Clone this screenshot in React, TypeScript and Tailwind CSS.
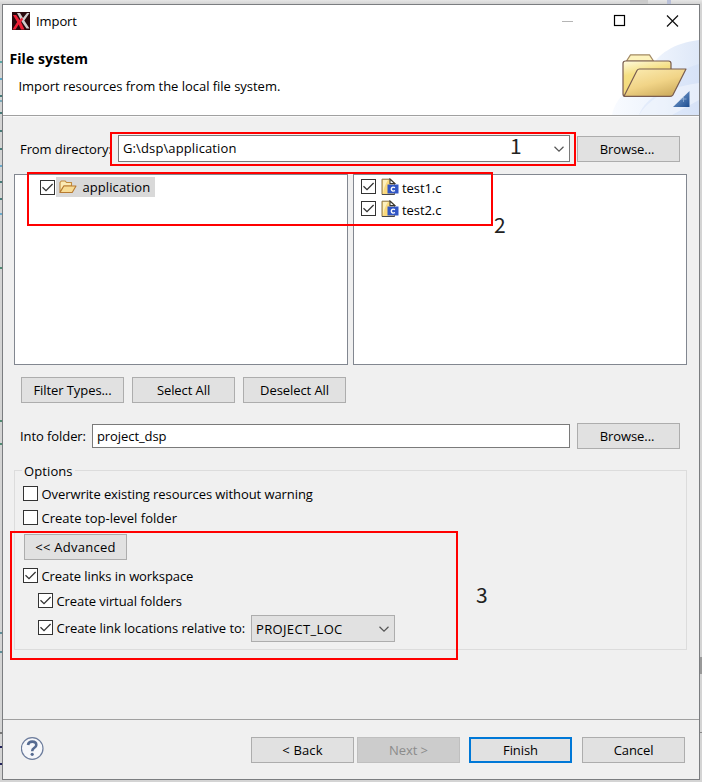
import type { ReactNode } from 'react'
import clsx from 'clsx'

interface ButtonProps {
  children: ReactNode
  className?: string
  disabled?: boolean
  primary?: boolean
}

function Button({ children, className, disabled, primary }: ButtonProps) {
  return (
    <button
      className={clsx(
        'flex h-[26px] w-[103px] shrink-0 items-center justify-center whitespace-nowrap',
        disabled && 'border border-[#bfbfbf] bg-[#cccccc] text-[#8b8b8b]',
        primary && 'border-2 border-[#0078d7] bg-[#e1e1e1]',
        !disabled && !primary && 'border border-[#adadad] bg-[#e1e1e1]',
        className
      )}
    >
      {children}
    </button>
  )
}

function Checkbox({ checked }: { checked?: boolean }) {
  return (
    <span className="block h-[15px] w-[15px] shrink-0 border border-[#333] bg-white">
      {checked && (
        <svg width="13" height="13" viewBox="0 0 13 13" fill="none" stroke="#333" strokeWidth="1.3">
          <path d="M1.5 6.3 L5 9.6 L11.6 3" />
        </svg>
      )}
    </span>
  )
}

function Option({ label, checked, className }: { label: string; checked?: boolean; className?: string }) {
  return (
    <label className={clsx('flex h-[15px] items-center gap-[3.5px] whitespace-nowrap', className)}>
      <Checkbox checked={checked} />
      <span>{label}</span>
    </label>
  )
}

function Chevron() {
  return (
    <svg width="12" height="8" viewBox="0 0 12 8" fill="none" stroke="#555" strokeWidth="1.2">
      <path d="M1.5 1.8 L6 6.2 L10.5 1.8" />
    </svg>
  )
}

function AppIcon() {
  return (
    <svg width="18" height="18" viewBox="0 0 18 18">
      <rect width="18" height="18" fill="#2a080c" />
      <path d="M5 1 H8 L11 6 L15 1 H17.5 L12.3 8.5 L17.5 16.5 H14.5 L10 10 Z" fill="#d2cccc" />
      <path d="M1 3 H4.2 L7.5 8 L10 5.5 L11 7.5 L9 10 L12.5 17.5 H9 L6.7 12.5 L3.5 17.5 H0.5 L5.2 10 Z" fill="#ef2036" />
    </svg>
  )
}

function Banner() {
  return (
    <svg width="87" height="75" viewBox="0 0 87 75" className="absolute right-0 bottom-0">
      <defs>
        <linearGradient id="sky" x1="0" y1="0" x2="1" y2="0">
          <stop offset="0" stopColor="#f7faff" />
          <stop offset="0.5" stopColor="#eaf1fc" />
          <stop offset="1" stopColor="#d6e2f6" />
        </linearGradient>
        <linearGradient id="back" x1="0" y1="0" x2="0.3" y2="1">
          <stop offset="0" stopColor="#fffbe0" />
          <stop offset="0.4" stopColor="#f5df83" />
          <stop offset="1" stopColor="#f3d778" />
        </linearGradient>
        <linearGradient id="front" x1="0.2" y1="0" x2="0.8" y2="1">
          <stop offset="0" stopColor="#fae9ad" />
          <stop offset="0.5" stopColor="#f1d487" />
          <stop offset="1" stopColor="#cba95b" />
        </linearGradient>
        <linearGradient id="corner" x1="0" y1="0" x2="1" y2="1">
          <stop offset="0" stopColor="#86abd7" />
          <stop offset="1" stopColor="#1d4d91" />
        </linearGradient>
      </defs>
      <path d="M87 0 C62 3 45 14 38 30 C22 45 4 55 0 75 H87 Z" fill="url(#sky)" opacity="0.8" />
      <path d="M87 24 C72 28 60 36 52 50 C38 58 30 66 27 75 H87 Z" fill="#c9dbf5" opacity="0.35" />
      <path d="M87 43 C62 46 39 56 27 75 H60 L87 60 Z" fill="#fff" opacity="0.4" />
      <g stroke="#795d50" strokeWidth="1.2" strokeLinejoin="round">
        <path d="M14.5 21 L18.5 14.8 H37.5 L41.5 21 Z" fill="#fdf3bd" stroke="#a38a65" />
        <path d="M11 23.5 Q11 21 13.5 21 H56.5 Q59 21 59 23.5 V56 H13 Q11 56 11 54 Z" fill="url(#back)" />
        <path d="M12 56.3 L25 30.5 Q25.8 29 27.5 29 H74 L61 54.8 Q60 56.3 58 56.3 Z" fill="url(#front)" />
      </g>
      <path d="M77.5 51 V67 H61 Z" fill="url(#corner)" />
      <path d="M71.5 56 V62 M68.5 59 H74.5" stroke="#adc6e4" strokeWidth="1" opacity="0.6" />
    </svg>
  )
}

function FolderIcon() {
  return (
    <svg width="18" height="14" viewBox="0 0 18 14" strokeLinejoin="round">
      <path d="M1 12 V2.5 L2.3 1 H6.2 L7.5 2.5 H12.5 V6 H5 Z" fill="#fbeab5" stroke="#c18a3c" strokeWidth="1.1" />
      <path d="M1 12.5 L4.8 6 H17 L13.2 12.5 Z" fill="#f8dc94" stroke="#b77b32" strokeWidth="1.1" />
    </svg>
  )
}

function SourceIcon() {
  return (
    <svg width="18" height="18" viewBox="0 0 18 18" className="ml-[5px]">
      <path d="M1 1.2 H9.5 L13.5 5.2 V16.5 H1 Z" fill="#fad97c" stroke="#8a7448" strokeWidth="1" />
      <path d="M2 16 V2 H7 Q3 8 2 16 Z" fill="#fdf0bd" />
      <path d="M9 1 V5.5 H13.8 Z" fill="#fff" stroke="#39372f" strokeWidth="1.1" />
      <path d="M1 16.5 H13.5" stroke="#45464c" />
      <rect x="6.5" y="6.5" width="11" height="9" fill="#3156c5" />
      <path d="M14 9.6 Q10.6 8.2 10.3 11.1 Q10.6 14 14 12.7" fill="none" stroke="#fff" strokeWidth="1.4" />
    </svg>
  )
}

function HelpIcon() {
  return (
    <svg width="24" height="24" viewBox="0 0 24 24" fill="none">
      <circle cx="11.2" cy="11.5" r="10.8" fill="#f6f7fa" stroke="#6c7c9c" strokeWidth="1.2" />
      <path d="M7 8 Q7.5 4.6 11.2 4.6 Q15.3 4.6 15.3 7.9 Q15.3 9.6 13.1 11 Q11.2 12.2 11.2 14.2" stroke="#566b91" strokeWidth="2.6" />
      <circle cx="11.2" cy="17.3" r="1.6" fill="#566b91" />
    </svg>
  )
}

// Slivers of the editor window that stay visible left of the dialog
const slivers = [
  { top: 61, color: 'bg-[#5aa7a5]' },
  { top: 78, color: 'bg-[#5ba3c4]' },
  { top: 95, color: 'bg-[#477b78]' },
  { top: 100, color: 'bg-[#79a9b9]' },
  { top: 112, color: 'bg-[#477b78]' },
  { top: 130, color: 'bg-[#477b78]' },
  { top: 148, color: 'bg-[#477b78]' },
  { top: 165, color: 'bg-[#6aaacb]' },
  { top: 181, color: 'bg-[#477b78]' },
  { top: 198, color: 'bg-[#477b78]' },
  { top: 213, color: 'bg-[#6aaacb]' },
  { top: 267, color: 'bg-[#4f8a72]' },
  { top: 420, color: 'bg-[#4f8a72]' },
  { top: 443, color: 'bg-[#4f8a72]' },
  { top: 632, color: 'bg-[#5f8f98]' },
  { top: 651, color: 'bg-[#5f8f98]' },
  { top: 732, color: 'bg-[#777777]' },
  { top: 746, color: 'bg-[#22225b]' },
  { top: 763, color: 'bg-[#22225b]' },
]

function Mark({ className }: { className: string }) {
  return <div className={clsx('pointer-events-none absolute border-2 border-[#ff0000]', className)} />
}

function MarkNumber({ n, className }: { n: number; className: string }) {
  return (
    <span className={clsx("absolute font-['Noto_Sans_CJK_JP',sans-serif] text-[21px] leading-[24px] font-normal tracking-normal text-[#222]", className)}>
      {n}
    </span>
  )
}

export default function App() {
  return (
    <div className="relative h-[782px] w-[702px] overflow-hidden bg-[#c9c9cb] bg-linear-to-b from-[#e6e6e6] to-[#d4d4d4] to-[4px] pt-1 pl-0.5 font-['Open_Sans',sans-serif] text-[13px] leading-[18px] tracking-[-0.08px] text-black">
      {slivers.map((s) => (
        <div key={s.top} className={clsx('absolute left-0 h-[2px] w-[2px]', s.color)} style={{ top: s.top }} />
      ))}
      <div className="absolute top-0 left-[630px] h-1 w-[18px] bg-[#cbcbcb]" />
      <div className="absolute top-0 left-[667px] h-1 w-1 bg-[#b9c0d8]" />
      <div className="absolute top-[657px] left-[700px] h-[17px] w-0.5 bg-[#999]" />
      <div className="absolute top-[732px] left-[700px] h-px w-0.5 bg-[#888]" />

      <div className="flex h-[776px] w-[698px] flex-col border border-[#7b7d80] bg-[#f0f0f0]">
        {/* Title bar and wizard header */}
        <header className="relative h-[111px] shrink-0 border-b border-[#a0a0a0] bg-white">
          <Banner />
          <div className="relative flex h-[32px] items-center pl-[9px]">
            <AppIcon />
            <span className="ml-1.5">Import</span>
            <svg width="130" height="14" viewBox="0 0 130 14" fill="none" className="mr-[13px] ml-auto">
              <path d="M6 7.5 H17" stroke="#b5b5b5" />
              <rect x="58.5" y="1.5" width="10" height="10" stroke="#000" strokeWidth="1.2" />
              <path d="M111 1.5 L122 12.5 M122 1.5 L111 12.5" stroke="#111" strokeWidth="1.2" />
            </svg>
          </div>
          <h1 className="relative mt-[13px] pl-[6.5px] text-[14px] font-bold tracking-[0.05px]">File system</h1>
          <p className="relative mt-[9px] pl-[15.5px] tracking-[-0.03px]">Import resources from the local file system.</p>
        </header>

        <main className="flex-1 border-t border-[#fafafa] pl-[11px]">
          {/* Source directory */}
          <div className="mt-[18px] flex h-[27px] items-center pl-1.5">
            <span className="w-[98px] whitespace-nowrap">From directory:</span>
            <div className="flex h-[27px] w-[452px] items-center justify-between border border-[#7a7a7a] bg-white pr-1 pl-1">
              <span className="-mt-0.5 tracking-[0.12px]">G:\dsp\application</span>
              <Chevron />
            </div>
            <Button className="ml-[7px] pr-[3px]">Browse...</Button>
          </div>

          {/* Folder tree and file list */}
          <div className="mt-3 flex gap-[5px]">
            <div className="h-[191px] w-[334px] border border-[#828790] bg-white pt-0.5 pl-[25px]">
              <div className="flex h-5 items-center">
                <Checkbox checked />
                <div className="ml-px flex h-5 w-[99px] items-center bg-[#d9d9d9] pl-[3px]">
                  <FolderIcon />
                  <span className="ml-[5.5px] tracking-[0.08px]">application</span>
                </div>
              </div>
            </div>
            <div className="h-[191px] w-[334px] border border-[#828790] bg-white pt-px pl-[7px]">
              {['test1.c', 'test2.c'].map((file) => (
                <div key={file} className="flex h-[22px] items-center">
                  <span className="-mt-0.5"><Checkbox checked /></span>
                  <SourceIcon />
                  <span className="mt-px ml-[3px]">{file}</span>
                </div>
              ))}
            </div>
          </div>

          <div className="mt-3 flex gap-2 pl-[7px]">
            <Button>Filter Types...</Button>
            <Button>Select All</Button>
            <Button>Deselect All</Button>
          </div>

          {/* Target folder */}
          <div className="mt-5 flex h-[26px] items-center pl-1.5">
            <span className="w-[72px] whitespace-nowrap">Into folder:</span>
            <div className="flex h-6 w-[478px] items-center border border-[#7a7a7a] bg-white pl-1">project_dsp</div>
            <Button className="ml-[7px] pr-[3px]">Browse...</Button>
          </div>

          {/* Options group */}
          <section className="relative mt-[21px] h-[180px] w-[673px] border border-[#dcdcdc] pt-[15px] pl-2">
            <span className="absolute -top-[9px] left-[7px] bg-[#f0f0f0] px-[2px] tracking-[0.1px]">Options</span>
            <Option label="Overwrite existing resources without warning" />
            <Option label="Create top-level folder" className="mt-[9px] tracking-[0.02px]" />
            <Button className="mt-[9px] ml-px tracking-[0.25px]">&lt;&lt; Advanced</Button>
            <Option label="Create links in workspace" checked className="mt-2" />
            <Option label="Create virtual folders" checked className="mt-[10px] ml-[15px]" />
            <div className="mt-[7px] ml-[15px] flex h-[27px] items-center">
              <Option label="Create link locations relative to:" checked className="-mt-0.5 w-[213px] tracking-[-0.04px]" />
              <div className="flex h-[27px] w-[144px] items-center justify-between border border-[#adadad] bg-[#e1e1e1] pr-1 pl-1">
                <span className="tracking-[0.35px]">PROJECT_LOC</span>
                <Chevron />
              </div>
            </div>
          </section>
        </main>

        <footer className="flex h-[60px] shrink-0 items-start border-t border-[#a0a0a0] pt-[17px] pl-[18px]">
          <div className="w-[230px] shrink-0">
            <HelpIcon />
          </div>
          <Button className="tracking-[0.15px]">&lt; Back</Button>
          <Button className="ml-[3px]" disabled>Next &gt;</Button>
          <Button className="ml-[9px]" primary>Finish</Button>
          <Button className="ml-[10px]">Cancel</Button>
        </footer>
      </div>

      {/* Step annotations */}
      <Mark className="top-[132px] left-[110px] h-[34px] w-[466px]" />
      <Mark className="top-[172px] left-[27px] h-[54px] w-[466px]" />
      <Mark className="top-[531px] left-[10px] h-[129px] w-[448px]" />
      <MarkNumber n={1} className="top-[133px] left-[510px]" />
      <MarkNumber n={2} className="top-[212px] left-[494px]" />
      <MarkNumber n={3} className="top-[582px] left-[476px]" />
    </div>
  )
}
